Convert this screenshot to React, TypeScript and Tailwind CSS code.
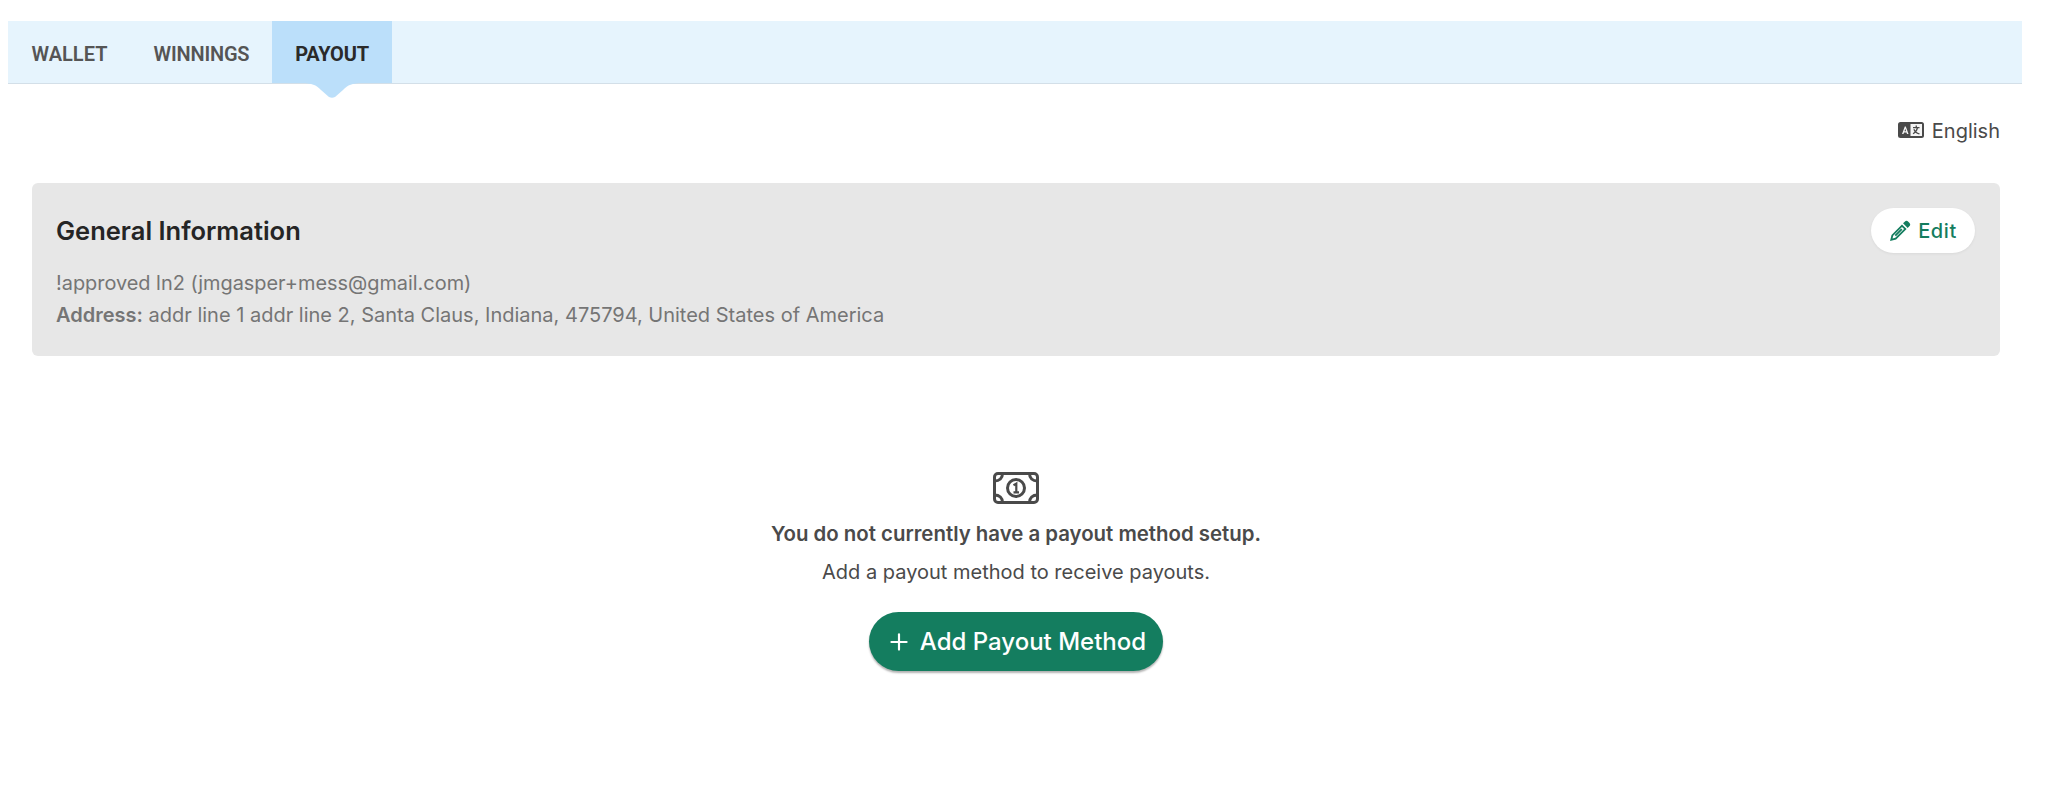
import { Plus } from "lucide-react";

const TABS = [
  { label: "WALLET", width: "w-[123px]", tracking: "", active: false },
  { label: "WINNINGS", width: "w-[141px]", tracking: "tracking-[-0.2px]", active: false },
  { label: "PAYOUT", width: "w-[120px]", tracking: "tracking-[-0.2px]", active: true },
];

function LanguageIcon() {
  return (
    <svg width="26" height="16" viewBox="0 0 26 16" className="-mt-[2px] block">
      <rect x="0" y="0" width="26" height="16" rx="2.5" fill="#4a4a4a" />
      <rect x="12.5" y="2" width="11.5" height="12" fill="#f5f5f5" />
      <path d="M4 12 L6.8 4.5 H7.8 L10.5 12 H9 L8.5 10.4 H6 L5.5 12 Z M6.5 9.2 H8.1 L7.3 6.7 Z" fill="#f5f5f5" />
      <path d="M15 5 H21.5 V6.2 H15 Z M17.6 3.6 H18.9 V5 H17.6 Z M20 6.2 C19.4 9 17.6 11 15.3 12.3 L14.7 11.2 C16.6 10.2 18 8.5 18.6 6.2 Z M16.5 7 C17.3 9.2 19 10.8 21.8 11.4 L21.2 12.5 C18.2 11.8 16.2 10 15.3 7.4 Z" fill="#4a4a4a" />
    </svg>
  );
}

function PencilIcon() {
  return (
    <svg width="22" height="22" viewBox="0 0 21 21" className="block">
      <path d="M15 1.6 a2.4 2.4 0 0 1 3.4 0 l1 1 a2.4 2.4 0 0 1 0 3.4 l-1.6 1.6 -4.4 -4.4 Z" fill="#147d5f" />
      <path d="M12.4 4.2 L16.8 8.6 L6.8 18.6 L1 20 L2.4 14.2 Z M12.4 6.6 L4 15 L3.4 17.6 L6 17 L14.4 8.6 Z" fill="#147d5f" />
      <path d="M11.6 8.2 L12.8 9.4 L6.6 15.6 L5.4 14.4 Z" fill="#147d5f" />
    </svg>
  );
}

function MoneyIcon() {
  return (
    <svg width="46" height="32" viewBox="0 0 46 32" fill="none" stroke="#4a4a4a" strokeWidth="3" className="block">
      <rect x="1.5" y="1.5" width="43" height="29" rx="3.5" />
      <path d="M1.5 9 C6.5 9 9.5 6 9.5 1.5" />
      <path d="M44.5 9 C39.5 9 36.5 6 36.5 1.5" />
      <path d="M1.5 23 C6.5 23 9.5 26 9.5 30.5" />
      <path d="M44.5 23 C39.5 23 36.5 26 36.5 30.5" />
      <circle cx="23" cy="16" r="8.5" strokeWidth="3" />
      <path d="M20.5 13.2 L23.3 11.6 V20.4 M20.5 20.4 H26" strokeWidth="2.2" />
    </svg>
  );
}

export default function App() {
  return (
    <div className="min-h-[786px] bg-white pt-[21px] pl-2 pr-[26px] font-['Inter',sans-serif] text-[#4a4a4a]">
      <nav className="flex h-[63px] border-b border-[#d3dfe8] bg-[#e6f4fd]">
        {TABS.map((tab) => (
          <div
            key={tab.label}
            className={
              tab.active
                ? `relative flex h-[62px] ${tab.width} ${tab.tracking} items-center justify-center bg-[#bbdffa] font-['Roboto',sans-serif] text-[20px] font-bold text-[#2a2a2a]`
                : `flex h-[62px] ${tab.width} ${tab.tracking} items-center justify-center font-['Roboto',sans-serif] text-[20px] font-semibold text-[#555555]`
            }
          >
            <span className="pt-[3px]">{tab.label}</span>
            {tab.active && (
              <svg width="60" height="15" viewBox="0 0 60 15" className="absolute top-[62px] left-[30px]">
                <path d="M0 0 H60 C50 0 46 2 41 7 L33 14 Q30 15.5 27 14 L19 7 C14 2 10 0 0 0 Z" fill="#bbdffa" />
              </svg>
            )}
          </div>
        ))}
      </nav>

      <div className="ml-6 mr-[22px]">
        <div className="flex h-[99px] items-center justify-end gap-[8px] pb-[6px] text-[20px] text-[#4a4a4a]">
          <LanguageIcon />
          <span>English</span>
        </div>

        <section className="h-[173px] rounded-md bg-[#e7e7e7] pl-6 pr-[25px] pt-[25px]">
          <div className="flex items-start justify-between">
            <h2 className="pt-[3px] text-[25.5px] leading-[40px] font-semibold text-[#252525]">General Information</h2>
            <button className="flex h-[45px] w-[104px] items-center justify-center gap-[7px] rounded-full bg-white text-[20px] font-medium tracking-[0.6px] text-[#147d5f] shadow-[0_1px_3px_rgba(0,0,0,0.06)]">
              <PencilIcon />
              Edit
            </button>
          </div>
          <p className="mt-[14px] text-[19.9px] leading-[32px] text-[#757575]">!approved ln2 (jmgasper+mess@gmail.com)</p>
          <p className="text-[20px] leading-[33px] text-[#757575]">
            <strong className="font-semibold">Address:</strong> addr line 1 addr line 2, Santa Claus, Indiana, 475794, United States of America
          </p>
        </section>

        <section className="flex flex-col items-center pt-[116px]">
          <MoneyIcon />
          <p className="mt-[15px] text-[20.4px] leading-[30px] font-semibold text-[#4a4a4a]">You do not currently have a payout method setup.</p>
          <p className="mt-[8px] text-[20px] leading-[30px] text-[#4a4a4a]">Add a payout method to receive payouts.</p>
          <button className="mt-[25px] flex h-[59px] w-[294px] items-center justify-center gap-[8px] rounded-full bg-[#147d5f] text-[24px] font-medium text-white shadow-[0_2px_2px_rgba(0,0,0,0.3)]">
            <Plus size={26} strokeWidth={2} />
            Add Payout Method
          </button>
        </section>
      </div>
    </div>
  );
}
